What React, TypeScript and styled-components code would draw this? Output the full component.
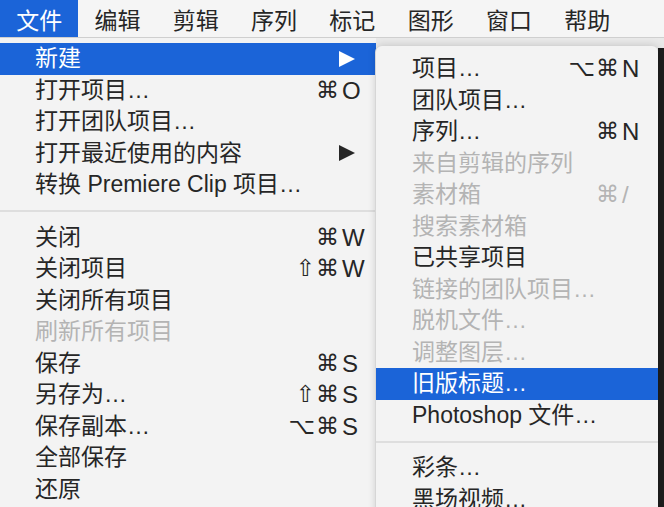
import React from "react";
import styled, { createGlobalStyle, css } from "styled-components";

const Global = createGlobalStyle`
  html, body { margin: 0; padding: 0; }
  body {
    width: 664px;
    height: 507px;
    overflow: hidden;
    background: #e9e9e9;
    font-family: "Liberation Sans", "Noto Sans CJK SC", "DejaVu Sans", sans-serif;
    -webkit-font-smoothing: antialiased;
  }
`;

const BLUE = "#1b64d8";

const Screen = styled.div`
  width: 664px;
  height: 507px;
  display: flex;
  flex-direction: column;
  overflow: hidden;
`;

const MenuBar = styled.div`
  height: 37px;
  flex: none;
  display: flex;
  align-items: stretch;
  background: #f5f5f5;
  border-bottom: 1px solid #cfcfcf;
`;

const BarItem = styled.div<{ $active?: boolean }>`
  width: 78.3px;
  display: flex;
  align-items: center;
  justify-content: center;
  font-size: 23px;
  color: ${(p) => (p.$active ? "#fff" : "#262626")};
  background: ${(p) => (p.$active ? BLUE : "transparent")};
`;

const Workspace = styled.div`
  flex: 1;
  display: flex;
  align-items: flex-start;
  min-height: 0;
`;

const Panel = styled.div<{ $sub?: boolean }>`
  flex: none;
  display: flex;
  flex-direction: column;
  background: #f3f3f3;
  height: 100%;
  ${(p) =>
    p.$sub
      ? css`
          width: 282px;
          margin-top: 8px;
          padding-top: 7px;
          border-radius: 6px 6px 0 0;
          box-shadow: -1px 0 0 #d6d6d6, 0 0 8px rgba(0, 0, 0, 0.18);
          position: relative;
          z-index: 1;
        `
      : css`
          width: 376px;
          padding-top: 5px;
        `}
`;

const Backdrop = styled.div`
  flex: 1;
  align-self: stretch;
  margin-top: 10px;
  background: #1d1d1d;
`;

const Row = styled.div<{ $active?: boolean; $disabled?: boolean; $sub?: boolean }>`
  height: 31.5px;
  flex: none;
  display: grid;
  grid-template-columns: 1fr auto 22px;
  align-items: center;
  padding: ${(p) => (p.$sub ? "0 14px 0 36px" : "0 12px 0 35px")};
  font-size: 23px;
  line-height: 31.5px;
  white-space: nowrap;
  color: ${(p) => (p.$active ? "#fff" : p.$disabled ? "#b4b4b4" : "#262626")};
  background: ${(p) => (p.$active ? BLUE : "transparent")};
`;

const Label = styled.span``;

const Mods = styled.span`
  font-family: "DejaVu Sans", sans-serif;
  font-size: 23px;
  letter-spacing: 1px;
  text-align: right;
  padding-right: 2px;
`;

const Key = styled.span`
  font-family: "Liberation Sans", "DejaVu Sans", sans-serif;
  font-size: 24px;
`;

const Arrow = styled.span`
  grid-column: 2 / 4;
  justify-self: end;
  margin-right: 9px;
  width: 0;
  height: 0;
  border-left: 16px solid currentColor;
  border-top: 8px solid transparent;
  border-bottom: 8px solid transparent;
`;

const Separator = styled.div`
  height: 21px;
  flex: none;
  display: flex;
  align-items: center;
  &::after {
    content: "";
    flex: 1;
    height: 2px;
    background: #dedede;
  }
`;

type Item =
  | "sep"
  | {
      label: string;
      mods?: string;
      k?: string;
      arrow?: boolean;
      active?: boolean;
      disabled?: boolean;
    };

const mainItems: Item[] = [
  { label: "新建", arrow: true, active: true },
  { label: "打开项目…", mods: "⌘", k: "O" },
  { label: "打开团队项目…" },
  { label: "打开最近使用的内容", arrow: true },
  { label: "转换 Premiere Clip 项目…" },
  "sep",
  { label: "关闭", mods: "⌘", k: "W" },
  { label: "关闭项目", mods: "⇧⌘", k: "W" },
  { label: "关闭所有项目" },
  { label: "刷新所有项目", disabled: true },
  { label: "保存", mods: "⌘", k: "S" },
  { label: "另存为…", mods: "⇧⌘", k: "S" },
  { label: "保存副本…", mods: "⌥⌘", k: "S" },
  { label: "全部保存" },
  { label: "还原" },
];

const subItems: Item[] = [
  { label: "项目…", mods: "⌥⌘", k: "N" },
  { label: "团队项目…" },
  { label: "序列…", mods: "⌘", k: "N" },
  { label: "来自剪辑的序列", disabled: true },
  { label: "素材箱", mods: "⌘", k: "/", disabled: true },
  { label: "搜索素材箱", disabled: true },
  { label: "已共享项目" },
  { label: "链接的团队项目…", disabled: true },
  { label: "脱机文件…", disabled: true },
  { label: "调整图层…", disabled: true },
  { label: "旧版标题…", active: true },
  { label: "Photoshop 文件…" },
  "sep",
  { label: "彩条…" },
  { label: "黑场视频…" },
];

const bar = ["文件", "编辑", "剪辑", "序列", "标记", "图形", "窗口", "帮助"];

function MenuList({ items, sub }: { items: Item[]; sub?: boolean }) {
  return (
    <Panel $sub={sub}>
      {items.map((it, i) =>
        it === "sep" ? (
          <Separator key={i} />
        ) : (
          <Row key={i} $sub={sub} $active={it.active} $disabled={it.disabled}>
            <Label>{it.label}</Label>
            {it.arrow ? (
              <Arrow />
            ) : (
              <>
                <Mods>{it.mods ?? ""}</Mods>
                <Key>{it.k ?? ""}</Key>
              </>
            )}
          </Row>
        )
      )}
    </Panel>
  );
}

export default function App() {
  return (
    <>
      <Global />
      <Screen>
        <MenuBar>
          {bar.map((b, i) => (
            <BarItem key={b} $active={i === 0}>
              {b}
            </BarItem>
          ))}
        </MenuBar>
        <Workspace>
          <MenuList items={mainItems} />
          <MenuList items={subItems} sub />
          <Backdrop />
        </Workspace>
      </Screen>
    </>
  );
}
